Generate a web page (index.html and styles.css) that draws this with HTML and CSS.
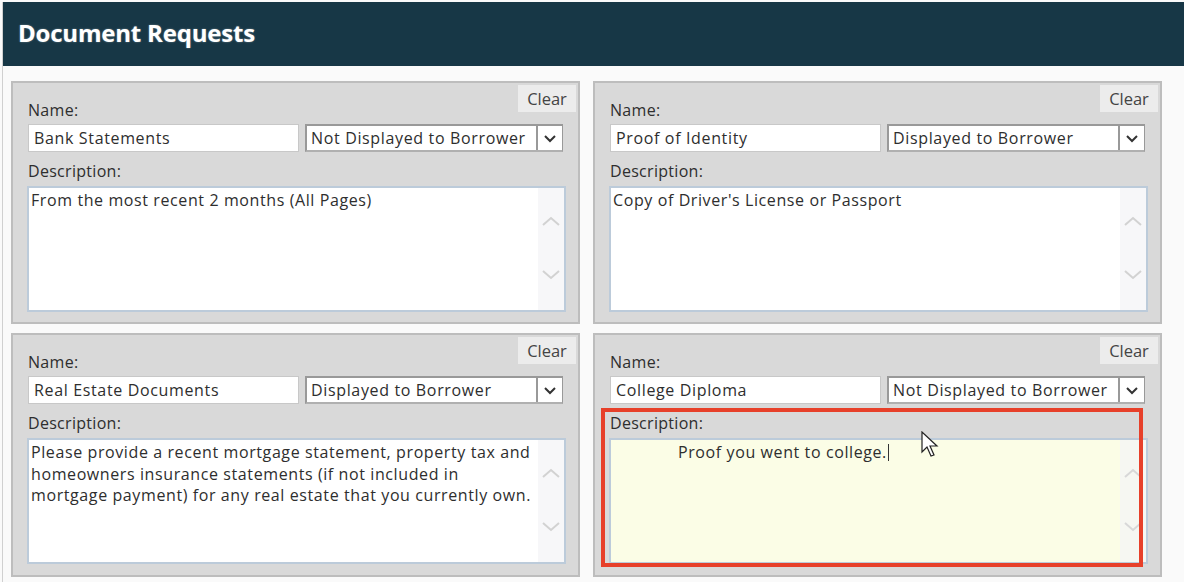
FILE: index.html
```html
<!DOCTYPE html>
<html>
	<head>
		<meta charset="utf-8" />
		<title>Document Requests</title>
		<link rel="stylesheet" href="styles.css">
	</head>
	<body>
		<div class="page">
			<div class="header">Document Requests</div>
			<div class="grid">
				<!--1-->
				<div class="panel">
					<div class="top">
						<span class="label">Name:</span>
						<span class="clear">Clear</span>
					</div>
					<div class="fields">
						<div class="name">Bank Statements</div>
						<div class="select"><span>Not Displayed to Borrower</span><i class="drop"><svg width="14" height="9" viewBox="0 0 14 9"><path d="M2 2 L7 7 L12 2" fill="none" stroke="#333" stroke-width="2"/></svg></i></div>
					</div>
					<div class="label desc">Description:</div>
					<div class="area">
						<div class="text">From the most recent 2 months (All Pages)</div>
						<div class="scroll">
							<svg width="20" height="10" viewBox="0 0 20 10"><path d="M2 9 L10 2 L18 9" fill="none" stroke="#d2d2d2" stroke-width="2"/></svg>
							<svg width="20" height="10" viewBox="0 0 20 10"><path d="M2 1 L10 8 L18 1" fill="none" stroke="#d2d2d2" stroke-width="2"/></svg>
						</div>
					</div>
				</div>
				<!--2-->
				<div class="panel">
					<div class="top">
						<span class="label">Name:</span>
						<span class="clear">Clear</span>
					</div>
					<div class="fields">
						<div class="name">Proof of Identity</div>
						<div class="select"><span>Displayed to Borrower</span><i class="drop"><svg width="14" height="9" viewBox="0 0 14 9"><path d="M2 2 L7 7 L12 2" fill="none" stroke="#333" stroke-width="2"/></svg></i></div>
					</div>
					<div class="label desc">Description:</div>
					<div class="area">
						<div class="text">Copy of Driver's License or Passport</div>
						<div class="scroll">
							<svg width="20" height="10" viewBox="0 0 20 10"><path d="M2 9 L10 2 L18 9" fill="none" stroke="#d2d2d2" stroke-width="2"/></svg>
							<svg width="20" height="10" viewBox="0 0 20 10"><path d="M2 1 L10 8 L18 1" fill="none" stroke="#d2d2d2" stroke-width="2"/></svg>
						</div>
					</div>
				</div>
				<!--3-->
				<div class="panel">
					<div class="top">
						<span class="label">Name:</span>
						<span class="clear">Clear</span>
					</div>
					<div class="fields">
						<div class="name">Real Estate Documents</div>
						<div class="select"><span>Displayed to Borrower</span><i class="drop"><svg width="14" height="9" viewBox="0 0 14 9"><path d="M2 2 L7 7 L12 2" fill="none" stroke="#333" stroke-width="2"/></svg></i></div>
					</div>
					<div class="label desc">Description:</div>
					<div class="area">
						<div class="text">Please provide a recent mortgage statement, property tax and homeowners insurance statements (if not included in mortgage payment) for any real estate that you currently own.</div>
						<div class="scroll">
							<svg width="20" height="10" viewBox="0 0 20 10"><path d="M2 9 L10 2 L18 9" fill="none" stroke="#d2d2d2" stroke-width="2"/></svg>
							<svg width="20" height="10" viewBox="0 0 20 10"><path d="M2 1 L10 8 L18 1" fill="none" stroke="#d2d2d2" stroke-width="2"/></svg>
						</div>
					</div>
				</div>
				<!--4-->
				<div class="panel">
					<div class="top">
						<span class="label">Name:</span>
						<span class="clear">Clear</span>
					</div>
					<div class="fields">
						<div class="name">College Diploma</div>
						<div class="select"><span>Not Displayed to Borrower</span><i class="drop"><svg width="14" height="9" viewBox="0 0 14 9"><path d="M2 2 L7 7 L12 2" fill="none" stroke="#333" stroke-width="2"/></svg></i></div>
					</div>
					<div class="label desc">Description:</div>
					<div class="area editing">
						<div class="text indent">Proof you went to college.<b class="caret"></b></div>
						<div class="scroll">
							<svg width="20" height="10" viewBox="0 0 20 10"><path d="M2 9 L10 2 L18 9" fill="none" stroke="#d8d8d8" stroke-width="2"/></svg>
							<svg width="20" height="10" viewBox="0 0 20 10"><path d="M2 1 L10 8 L18 1" fill="none" stroke="#d8d8d8" stroke-width="2"/></svg>
						</div>
					</div>
					<div class="mark"></div>
					<svg class="pointer" width="20" height="28" viewBox="0 0 20 28"><path d="M1 1 L1 21 L6 16 L10 25 L13 24 L9 15 L16 15 Z" fill="#fff" stroke="#222" stroke-width="1.2"/></svg>
				</div>
			</div>
		</div>
	</body>
</html>
```

FILE: styles.css
```css
body{
	margin: 0;
	background-color: #fafafa;
	font-family: "Open Sans", "Noto Sans", sans-serif;
	color: #2e2e2e;
}
.page{
	margin: 2px 0 0 2px;
	border-left: 1px solid #d0d0d0;
	height: 580px;
	overflow: hidden;
}
.header{
	height: 64px;
	background-color: #173746;
	color: #fff;
	font-size: 24px;
	font-weight: 700;
	line-height: 62px;
	padding-left: 15px;
	text-shadow: 0 0 2px rgba(255,255,255,0.4);
	letter-spacing: -0.2px;
}
.grid{
	display: grid;
	grid-template-columns: 569px 569px;
	grid-template-rows: 243px 244px;
	column-gap: 13px;
	row-gap: 9px;
	padding: 15px 0 0 8px;
}
.panel{
	position: relative;
	background-color: #d9d9d9;
	border: 2px solid #bdbdbd;
	padding: 2px 15px 0 15px;
}
.top{
	display: flex;
	justify-content: space-between;
	align-items: flex-end;
	height: 35px;
	margin-right: -13px;
}
.label{
	font-size: 16px;
	line-height: 20px;
	letter-spacing: 0.3px;
}
.clear{
	align-self: flex-start;
	background-color: #ececec;
	width: 58px;
	height: 27px;
	line-height: 27px;
	text-align: center;
	font-size: 16.5px;
	color: #444;
}
.fields{
	display: flex;
	gap: 6px;
	margin-top: 4px;
	font-size: 16px;
	letter-spacing: 0.65px;
	width: 535px;
}
.name{
	width: 264px;
	height: 26px;
	line-height: 26px;
	background-color: #fff;
	border: 1px solid #c8c8c8;
	padding-left: 5px;
	white-space: nowrap;
}
.select{
	flex: 1;
	display: flex;
	height: 24px;
	background-color: #fff;
	border: 2px solid #999;
	border-right-width: 1px;
	border-bottom-color: #b0b0b0;
	line-height: 24px;
	white-space: nowrap;
}
.select span{
	flex: 1;
	padding-left: 4px;
	overflow: hidden;
}
.drop{
	width: 24px;
	border-left: 2px solid #999;
	display: flex;
	align-items: center;
	justify-content: center;
	background-color: #fff;
}
.desc{
	margin-top: 9px;
}
.area{
	display: flex;
	margin-top: 5px;
	margin-left: -1px;
	width: 535px;
	height: 122px;
	background-color: #fff;
	border: 2px solid #bccbda;
}
.text{
	flex: 1;
	font-size: 16px;
	letter-spacing: 0.6px;
	line-height: 21.5px;
	padding: 2px 4px 0 2px;
}
.scroll{
	width: 26px;
	background-color: #f7f7f9;
	display: flex;
	flex-direction: column;
	align-items: center;
	padding-top: 28px;
	gap: 44px;
}
.editing{
	background-color: #fbfde6;
}
.editing .scroll{
	background-color: #f6f7f2;
}
.indent{
	padding-left: 67px;
}
.caret{
	display: inline-block;
	width: 1px;
	height: 17px;
	background-color: #333;
	vertical-align: -3px;
	margin-left: 1px;
}
.mark{
	position: absolute;
	left: 6px;
	top: 73px;
	width: 534px;
	height: 151px;
	border: 4px solid #e7402a;
}
.pointer{
	position: absolute;
	left: 326px;
	top: 96px;
}
```
